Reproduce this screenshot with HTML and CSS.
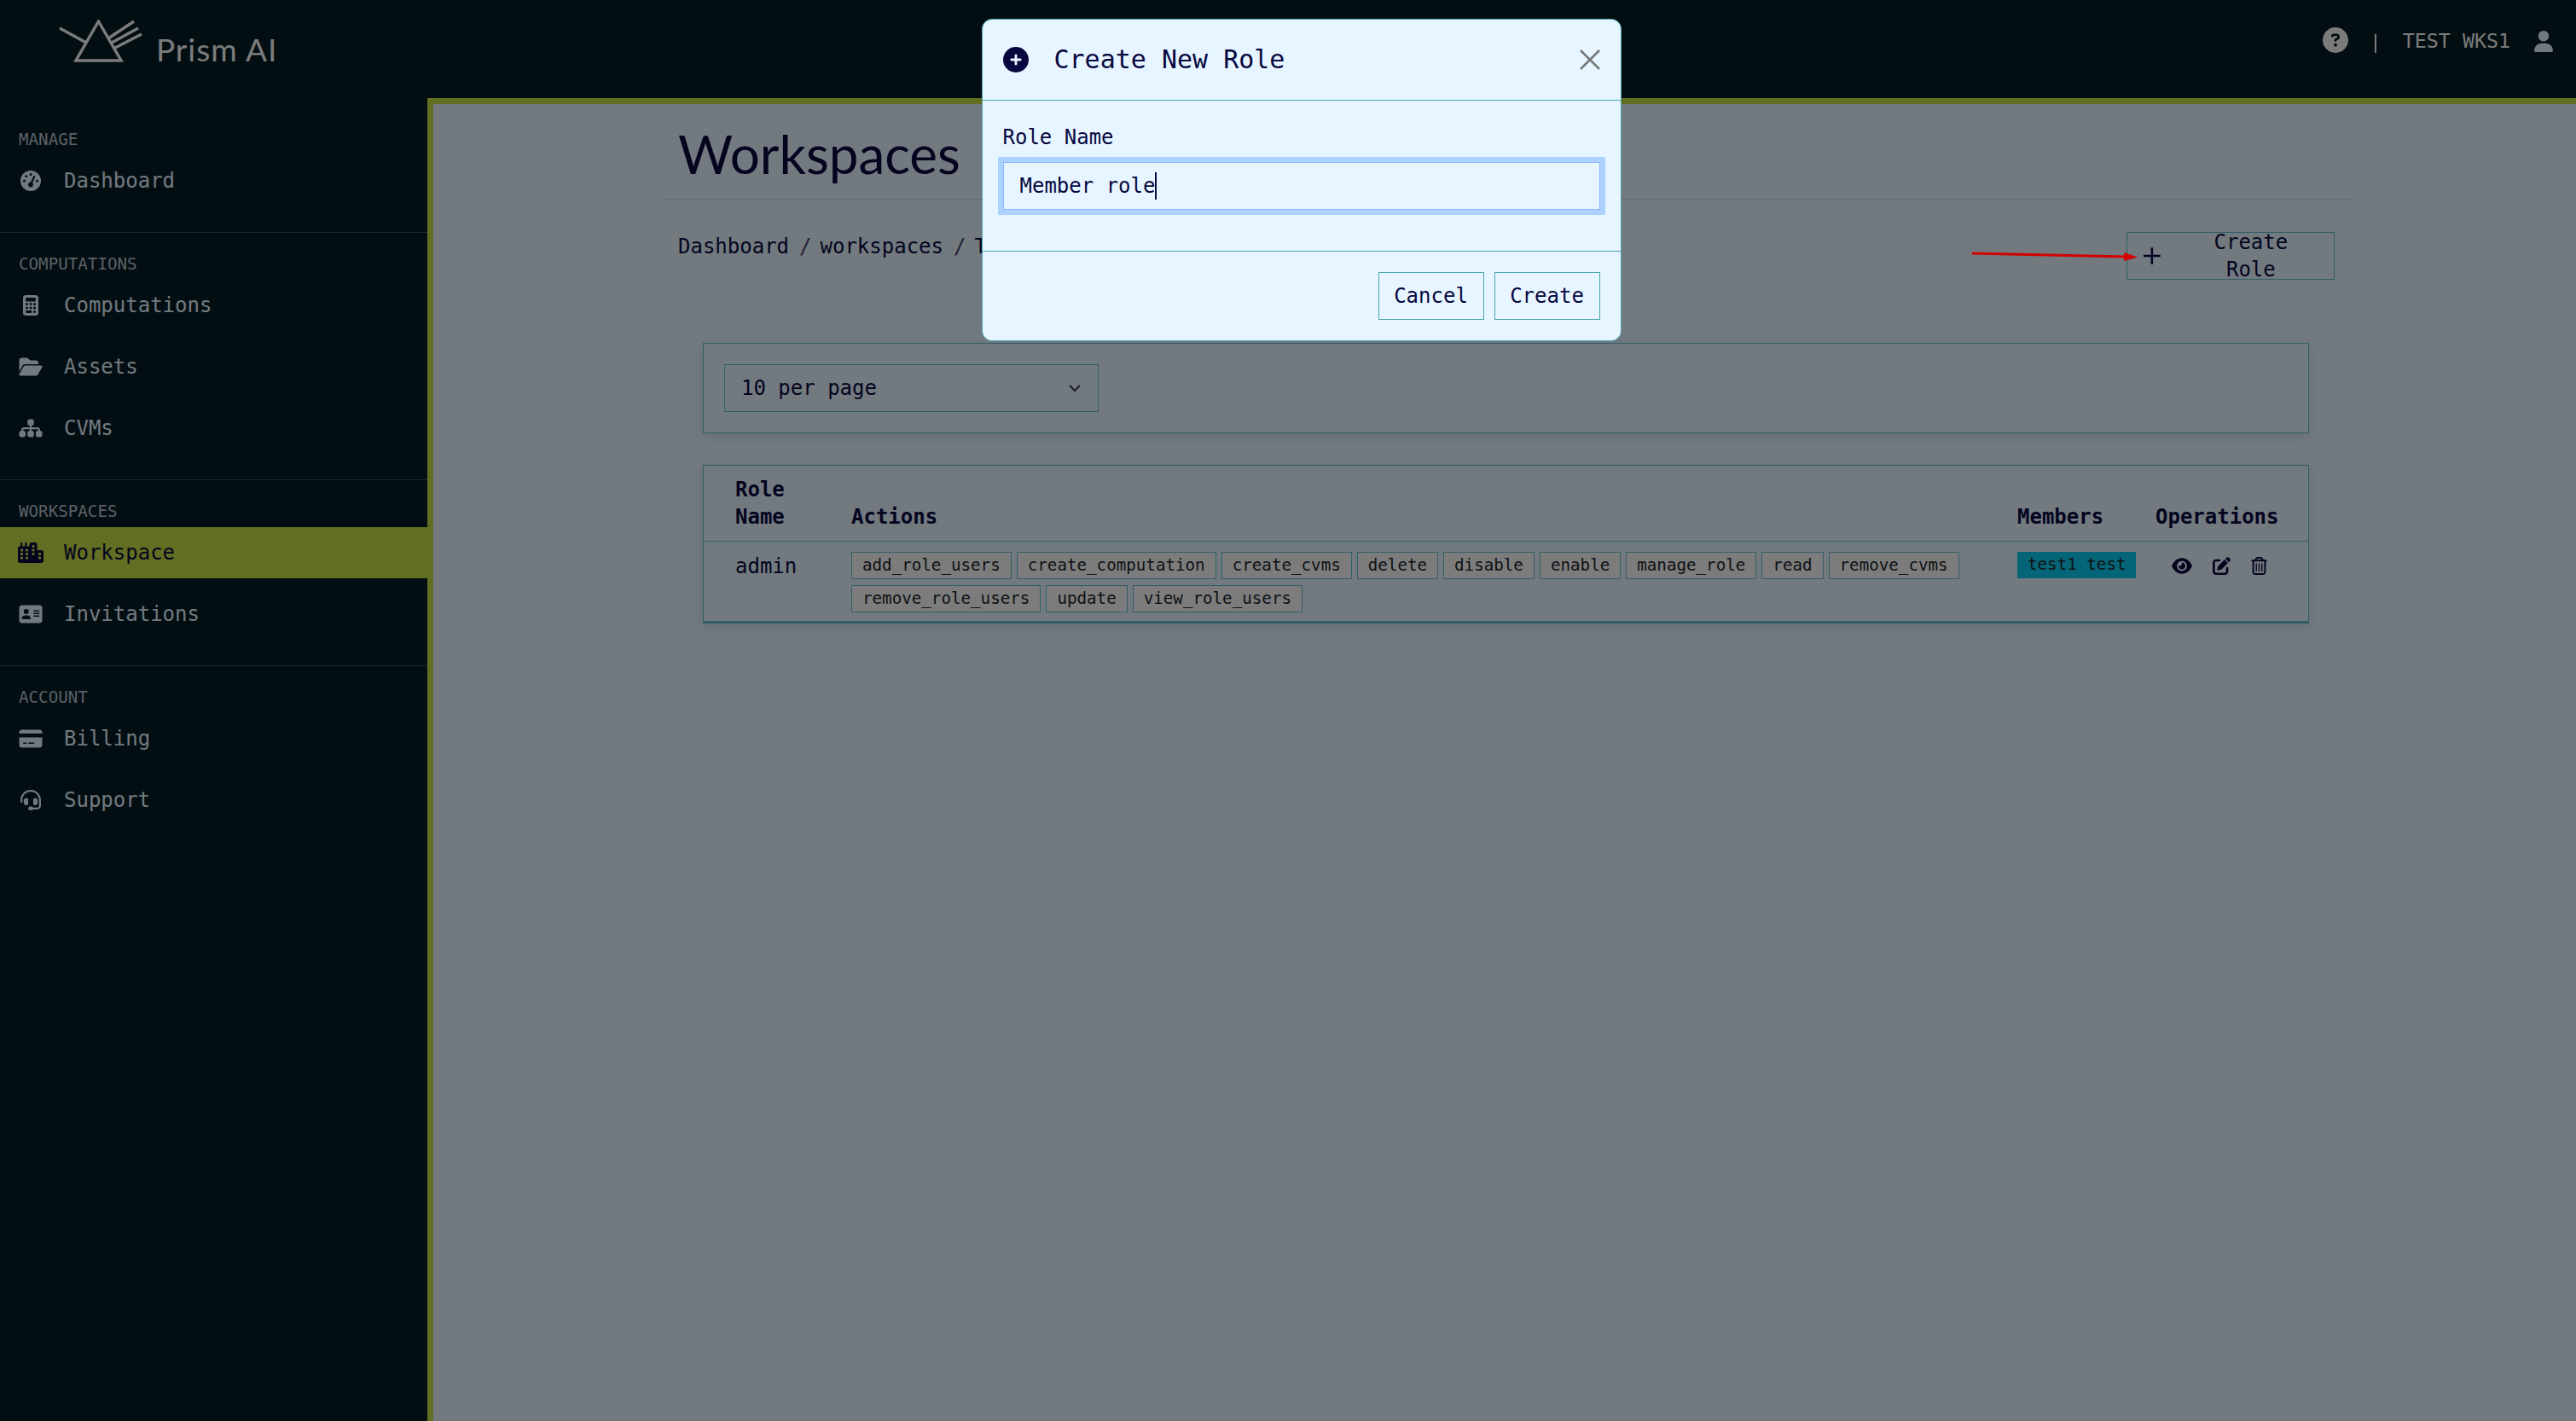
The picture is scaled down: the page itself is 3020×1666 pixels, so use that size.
FILE: index.html
```html
<!DOCTYPE html>
<html lang="en">

<head>
    <meta charset="UTF-8">
    <title>Prism AI - Workspace roles</title>
    <link rel="stylesheet" href="styles.css">
</head>

<body>
    <header class="topbar">
        <div class="brand">
            <svg class="brand-logo" viewBox="0 0 100 50">
                <path d="M47.5 2 L74 48 L21 48 Z M33 27 L2 10 M59 22 L89 2 M63 27 L94 10 M67 33 L98 17"></path>
            </svg>
            <span class="brand-name">Prism AI</span>
        </div>
        <div class="topbar-right">
            <svg class="help-icon" viewBox="0 0 512 512"><path d="M256 512A256 256 0 1 0 256 0a256 256 0 1 0 0 512zM169.8 165.3c7.9-22.3 29.1-37.3 52.8-37.3h58.3c34.9 0 63.1 28.3 63.1 63.1c0 22.6-12.1 43.5-31.7 54.8L280 264.4c-.2 13-10.9 23.6-24 23.6c-13.3 0-24-10.7-24-24V250.5c0-8.6 4.6-16.5 12.1-20.8l44.3-25.4c4.7-2.7 7.6-7.7 7.6-13.1c0-8.4-6.8-15.1-15.1-15.1H222.6c-3.4 0-6.4 2.1-7.5 5.3l-.4 1.2c-4.4 12.5-18.2 19-30.6 14.6s-19-18.2-14.6-30.6l.4-1.2zM224 352a32 32 0 1 1 64 0 32 32 0 1 1 -64 0z"></path></svg>
            <span class="topbar-sep"></span>
            <span class="topbar-user">TEST WKS1</span>
            <svg class="user-icon" viewBox="0 0 448 512"><path d="M224 256A128 128 0 1 0 224 0a128 128 0 1 0 0 256zm-45.7 48C79.8 304 0 383.8 0 482.3C0 498.7 13.3 512 29.7 512H418.3c16.4 0 29.7-13.3 29.7-29.7C448 383.8 368.2 304 269.7 304H178.3z"></path></svg>
        </div>
    </header>

    <div class="layout">
        <nav class="sidebar">
            <div class="nav-section first">
                <div class="nav-label">MANAGE</div>
                <a class="nav-item">
                    <svg viewBox="0 0 512 512"><path d="M0 256a256 256 0 1 1 512 0A256 256 0 1 1 0 256zM288 96a32 32 0 1 0 -64 0 32 32 0 1 0 64 0zM256 416c35.3 0 64-28.7 64-64c0-17.4-6.9-33.1-18.1-44.6L366 161.7c5.3-12.1-.2-26.3-12.3-31.6s-26.3 .2-31.6 12.3L257.9 288c-.6 0-1.3 0-1.9 0c-35.3 0-64 28.7-64 64s28.7 64 64 64zM176 144a32 32 0 1 0 -64 0 32 32 0 1 0 64 0zM96 288a32 32 0 1 0 0-64 32 32 0 1 0 0 64zm352-32a32 32 0 1 0 -64 0 32 32 0 1 0 64 0z"></path></svg>
                    <span>Dashboard</span>
                </a>
            </div>
            <div class="nav-section">
                <div class="nav-label">COMPUTATIONS</div>
                <a class="nav-item">
                    <svg viewBox="0 0 384 512"><path d="M64 0C28.7 0 0 28.7 0 64V448c0 35.3 28.7 64 64 64H320c35.3 0 64-28.7 64-64V64c0-35.3-28.7-64-64-64H64zM96 64H288c17.7 0 32 14.3 32 32v32c0 17.7-14.3 32-32 32H96c-17.7 0-32-14.3-32-32V96c0-17.7 14.3-32 32-32zm32 160a32 32 0 1 1 -64 0 32 32 0 1 1 64 0zM96 352a32 32 0 1 1 0-64 32 32 0 1 1 0 64zM64 416c0-17.7 14.3-32 32-32h96c17.7 0 32 14.3 32 32s-14.3 32-32 32H96c-17.7 0-32-14.3-32-32zM192 256a32 32 0 1 1 0-64 32 32 0 1 1 0 64zm32 64a32 32 0 1 1 -64 0 32 32 0 1 1 64 0zm64-64a32 32 0 1 1 0-64 32 32 0 1 1 0 64zm32 64a32 32 0 1 1 -64 0 32 32 0 1 1 64 0zM288 448a32 32 0 1 1 0-64 32 32 0 1 1 0 64z"></path></svg>
                    <span>Computations</span>
                </a>
                <a class="nav-item">
                    <svg viewBox="0 0 576 512"><path d="M88.7 223.8L0 375.8V96C0 60.7 28.7 32 64 32H181.5c17 0 33.3 6.7 45.3 18.7l26.5 26.5c12 12 28.3 18.7 45.3 18.7H416c35.3 0 64 28.7 64 64v32H144c-22.8 0-43.8 12.1-55.3 31.8zm27.6 16.1C122.1 230 132.6 224 144 224H544c11.5 0 22 6.1 27.7 16.1s5.7 22.2-.1 32.1l-112 192C453.9 474 443.4 480 432 480H32c-11.5 0-22-6.1-27.7-16.1s-5.7-22.2 .1-32.1l112-192z"></path></svg>
                    <span>Assets</span>
                </a>
                <a class="nav-item">
                    <svg viewBox="0 0 576 512"><path d="M208 80c0-26.5 21.5-48 48-48h64c26.5 0 48 21.5 48 48v64c0 26.5-21.5 48-48 48h-8v40H464c30.9 0 56 25.1 56 56v32h8c26.5 0 48 21.5 48 48v64c0 26.5-21.5 48-48 48H464c-26.5 0-48-21.5-48-48V368c0-26.5 21.5-48 48-48h8V288c0-4.4-3.6-8-8-8H312v40h8c26.5 0 48 21.5 48 48v64c0 26.5-21.5 48-48 48H256c-26.5 0-48-21.5-48-48V368c0-26.5 21.5-48 48-48h8V280H112c-4.4 0-8 3.6-8 8v32h8c26.5 0 48 21.5 48 48v64c0 26.5-21.5 48-48 48H48c-26.5 0-48-21.5-48-48V368c0-26.5 21.5-48 48-48h8V288c0-30.9 25.1-56 56-56H264V192h-8c-26.5 0-48-21.5-48-48V80z"></path></svg>
                    <span>CVMs</span>
                </a>
            </div>
            <div class="nav-section">
                <div class="nav-label">WORKSPACES</div>
                <a class="nav-item active">
                    <svg viewBox="0 0 640 512"><path d="M480 48c0-26.5-21.5-48-48-48H336c-26.5 0-48 21.5-48 48V96H224V24c0-13.3-10.7-24-24-24s-24 10.7-24 24V96H112V24c0-13.3-10.7-24-24-24S64 10.7 64 24V96H48C21.5 96 0 117.5 0 144v96V464c0 26.5 21.5 48 48 48H304h32 96H592c26.5 0 48-21.5 48-48V240c0-26.5-21.5-48-48-48H480V48zm96 320v32c0 8.8-7.2 16-16 16H528c-8.8 0-16-7.2-16-16V368c0-8.8 7.2-16 16-16h32c8.8 0 16 7.2 16 16zM240 416H208c-8.8 0-16-7.2-16-16V368c0-8.8 7.2-16 16-16h32c8.8 0 16 7.2 16 16v32c0 8.8-7.2 16-16 16zM128 400c0 8.8-7.2 16-16 16H80c-8.8 0-16-7.2-16-16V368c0-8.8 7.2-16 16-16h32c8.8 0 16 7.2 16 16v32zM560 256c8.8 0 16 7.2 16 16v32c0 8.8-7.2 16-16 16H528c-8.8 0-16-7.2-16-16V272c0-8.8 7.2-16 16-16h32zM256 176v32c0 8.8-7.2 16-16 16H208c-8.8 0-16-7.2-16-16V176c0-8.8 7.2-16 16-16h32c8.8 0 16 7.2 16 16zM112 160c8.8 0 16 7.2 16 16v32c0 8.8-7.2 16-16 16H80c-8.8 0-16-7.2-16-16V176c0-8.8 7.2-16 16-16h32zM256 304c0 8.8-7.2 16-16 16H208c-8.8 0-16-7.2-16-16V272c0-8.8 7.2-16 16-16h32c8.8 0 16 7.2 16 16v32zM112 320H80c-8.8 0-16-7.2-16-16V272c0-8.8 7.2-16 16-16h32c8.8 0 16 7.2 16 16v32c0 8.8-7.2 16-16 16zm304-48v32c0 8.8-7.2 16-16 16H368c-8.8 0-16-7.2-16-16V272c0-8.8 7.2-16 16-16h32c8.8 0 16 7.2 16 16zM368 64h32c8.8 0 16 7.2 16 16v32c0 8.8-7.2 16-16 16H368c-8.8 0-16-7.2-16-16V80c0-8.8 7.2-16 16-16zm48 112v32c0 8.8-7.2 16-16 16H368c-8.8 0-16-7.2-16-16V176c0-8.8 7.2-16 16-16h32c8.8 0 16 7.2 16 16z"></path></svg>
                    <span>Workspace</span>
                </a>
                <a class="nav-item">
                    <svg viewBox="0 0 576 512"><path d="M64 32C28.7 32 0 60.7 0 96V416c0 35.3 28.7 64 64 64H512c35.3 0 64-28.7 64-64V96c0-35.3-28.7-64-64-64H64zm80 256h64c44.2 0 80 35.8 80 80c0 8.8-7.2 16-16 16H80c-8.8 0-16-7.2-16-16c0-44.2 35.8-80 80-80zm-32-96a64 64 0 1 1 128 0 64 64 0 1 1 -128 0zm256-32H496c8.8 0 16 7.2 16 16s-7.2 16-16 16H368c-8.8 0-16-7.2-16-16s7.2-16 16-16zm0 64H496c8.8 0 16 7.2 16 16s-7.2 16-16 16H368c-8.8 0-16-7.2-16-16s7.2-16 16-16zm0 64H496c8.8 0 16 7.2 16 16s-7.2 16-16 16H368c-8.8 0-16-7.2-16-16s7.2-16 16-16z"></path></svg>
                    <span>Invitations</span>
                </a>
            </div>
            <div class="nav-section">
                <div class="nav-label">ACCOUNT</div>
                <a class="nav-item">
                    <svg viewBox="0 0 576 512"><path d="M64 32C28.7 32 0 60.7 0 96v32H576V96c0-35.3-28.7-64-64-64H64zM576 224H0V416c0 35.3 28.7 64 64 64H512c35.3 0 64-28.7 64-64V224zM112 352h64c8.8 0 16 7.2 16 16s-7.2 16-16 16H112c-8.8 0-16-7.2-16-16s7.2-16 16-16zm112 16c0-8.8 7.2-16 16-16H368c8.8 0 16 7.2 16 16s-7.2 16-16 16H240c-8.8 0-16-7.2-16-16z"></path></svg>
                    <span>Billing</span>
                </a>
                <a class="nav-item">
                    <svg viewBox="0 0 512 512"><path d="M256 48C141.1 48 48 141.1 48 256v40c0 13.3-10.7 24-24 24s-24-10.7-24-24V256C0 114.6 114.6 0 256 0S512 114.6 512 256V400.1c0 48.6-39.4 88-88.1 88L313.6 488c-8.3 14.3-23.8 24-41.6 24H240c-26.5 0-48-21.5-48-48s21.5-48 48-48h32c17.8 0 33.3 9.7 41.6 24l110.4 .1c22.1 0 40-17.9 40-40V256c0-114.9-93.1-208-208-208zM144 208h16c17.7 0 32 14.3 32 32V352c0 17.7-14.3 32-32 32H144c-35.3 0-64-28.7-64-64V272c0-35.3 28.7-64 64-64zm224 0c35.3 0 64 28.7 64 64v48c0 35.3-28.7 64-64 64H352c-17.7 0-32-14.3-32-32V240c0-17.7 14.3-32 32-32h16z"></path></svg>
                    <span>Support</span>
                </a>
            </div>
        </nav>

        <main class="content">
            <div class="container">
                <h1 class="page-title">Workspaces</h1>

                <div class="toolbar">
                    <div class="breadcrumb">
                        <span>Dashboard</span>
                        <span class="crumb-sep">/</span>
                        <span>workspaces</span>
                        <span class="crumb-sep">/</span>
                        <span>T</span>
                    </div>
                    <button class="btn create-btn">
                        <svg class="plus-icon" viewBox="0 0 20 20"><path d="M10 0V20M0 10H20"></path></svg>
                        Create Role
                    </button>
                </div>

                <div class="card filter-card">
                    <div class="per-page">
                        <span>10 per page</span>
                        <svg class="chevron" viewBox="0 0 16 16"><path d="M2 5l6 6 6-6"></path></svg>
                    </div>
                </div>

                <div class="card table-card">
                    <table class="roles-table">
                        <colgroup>
                            <col class="col-name">
                            <col class="col-actions">
                            <col class="col-members">
                            <col class="col-ops">
                        </colgroup>
                        <thead>
                            <tr>
                                <th>Role<br>Name</th>
                                <th>Actions</th>
                                <th>Members</th>
                                <th>Operations</th>
                            </tr>
                        </thead>
                        <tbody>
                            <tr>
                                <td class="role-name">admin</td>
                                <td>
                                    <div class="chips">
                                        <span class="chip">add_role_users</span>
                                        <span class="chip">create_computation</span>
                                        <span class="chip">create_cvms</span>
                                        <span class="chip">delete</span>
                                        <span class="chip">disable</span>
                                        <span class="chip">enable</span>
                                        <span class="chip">manage_role</span>
                                        <span class="chip">read</span>
                                        <span class="chip">remove_cvms</span>
                                        <span class="chip">remove_role_users</span>
                                        <span class="chip">update</span>
                                        <span class="chip">view_role_users</span>
                                    </div>
                                </td>
                                <td><span class="member">test1 test</span></td>
                                <td>
                                    <div class="ops">
                                        <svg class="op-eye" viewBox="0 0 576 512"><path d="M288 32c-80.8 0-145.5 36.8-192.6 80.6C48.6 156 17.3 208 2.5 243.7c-3.3 7.9-3.3 16.7 0 24.6C17.3 304 48.6 356 95.4 399.4C142.5 443.2 207.2 480 288 480s145.5-36.8 192.6-80.6c46.8-43.5 78.1-95.4 93-131.1c3.3-7.9 3.3-16.7 0-24.6c-14.9-35.7-46.2-87.7-93-131.1C433.5 68.8 368.8 32 288 32zM144 256a144 144 0 1 1 288 0 144 144 0 1 1 -288 0zm144-64c0 35.3-28.7 64-64 64c-7.1 0-13.9-1.2-20.3-3.3c-5.5-1.8-11.9 1.6-11.7 7.4c.3 6.9 1.3 13.8 3.2 20.7c13.7 51.2 66.4 81.6 117.6 67.9s81.6-66.4 67.9-117.6c-11.1-41.5-47.8-69.4-88.6-71.1c-5.8-.2-9.2 6.1-7.4 11.7c2.1 6.4 3.3 13.2 3.3 20.3z"></path></svg>
                                        <svg class="op-edit" viewBox="0 0 512 512"><path d="M471.6 21.7c-21.9-21.9-57.3-21.9-79.2 0L362.3 51.7l97.9 97.9 30.1-30.1c21.9-21.9 21.9-57.3 0-79.2L471.6 21.7zm-299.2 220c-6.1 6.1-10.8 13.6-13.5 21.9l-29.6 88.8c-2.9 8.6-.6 18.1 5.8 24.6s15.9 8.7 24.6 5.8l88.8-29.6c8.2-2.7 15.7-7.4 21.9-13.5L437.7 172.3 339.7 74.3 172.4 241.7zM96 64C43 64 0 107 0 160V416c0 53 43 96 96 96H352c53 0 96-43 96-96V320c0-17.7-14.3-32-32-32s-32 14.3-32 32v96c0 17.7-14.3 32-32 32H96c-17.7 0-32-14.3-32-32V160c0-17.7 14.3-32 32-32h96c17.7 0 32-14.3 32-32s-14.3-32-32-32H96z"></path></svg>
                                        <svg class="op-trash" viewBox="0 0 448 512"><path d="M170.5 51.6L151.5 80h145l-19-28.4c-1.5-2.2-4-3.6-6.7-3.6H177.1c-2.7 0-5.2 1.3-6.7 3.6zm147-26.6L354.2 80H368h48 8c13.3 0 24 10.7 24 24s-10.7 24-24 24h-8V432c0 44.2-35.8 80-80 80H112c-44.2 0-80-35.8-80-80V128H24c-13.3 0-24-10.7-24-24S10.7 80 24 80h8H80 93.8l36.7-55.1C140.9 9.4 158.4 0 177.1 0h93.7c18.7 0 36.2 9.4 46.6 24.9zM80 128V432c0 17.7 14.3 32 32 32H336c17.7 0 32-14.3 32-32V128H80zm80 64V400c0 8.8-7.2 16-16 16s-16-7.2-16-16V192c0-8.8 7.2-16 16-16s16 7.2 16 16zm80 0V400c0 8.8-7.2 16-16 16s-16-7.2-16-16V192c0-8.8 7.2-16 16-16s16 7.2 16 16zm80 0V400c0 8.8-7.2 16-16 16s-16-7.2-16-16V192c0-8.8 7.2-16 16-16s16 7.2 16 16z"></path></svg>
                                    </div>
                                </td>
                            </tr>
                        </tbody>
                    </table>
                </div>
            </div>
        </main>
    </div>

    <div class="overlay">
        <div class="modal">
            <div class="modal-header">
                <svg class="modal-icon" viewBox="0 0 512 512"><path d="M256 512A256 256 0 1 0 256 0a256 256 0 1 0 0 512zM232 344V280H168c-13.3 0-24-10.7-24-24s10.7-24 24-24h64V168c0-13.3 10.7-24 24-24s24 10.7 24 24v64h64c13.3 0 24 10.7 24 24s-10.7 24-24 24H280v64c0 13.3-10.7 24-24 24s-24-10.7-24-24z"></path></svg>
                <h2 class="modal-title">Create New Role</h2>
                <svg class="modal-close" viewBox="0 0 24 24"><path d="M1 1L23 23M23 1L1 23"></path></svg>
            </div>
            <div class="modal-body">
                <label class="field-label">Role Name</label>
                <div class="field-input">Member role<span class="caret"></span></div>
            </div>
            <div class="modal-footer">
                <button class="btn modal-btn">Cancel</button>
                <button class="btn modal-btn">Create</button>
            </div>
        </div>
    </div>

    <!-- annotation arrow, sits on top of the backdrop -->
    <svg class="annotation" viewBox="0 0 200 14">
        <path class="annotation-line" d="M1 2L182 6"></path>
        <path class="annotation-head" d="M179 1L195 6.500L179 11Z"></path>
    </svg>
</body>

</html>
```

FILE: styles.css
```css
* {
    box-sizing: border-box;
}

html,
body {
    height: 100%;
}

body {
    margin: 0;
    height: 1666px;
    overflow: hidden;
    font-family: "DejaVu Sans Mono", monospace;
    font-size: 24px;
    line-height: 32px;
    color: #08083f;
    background-color: #e4f2ff;
}

/* top bar */
.topbar {
    height: 115px;
    display: flex;
    justify-content: space-between;
    background-color: #041c24;
}

.brand {
    display: flex;
    align-items: flex-start;
    padding: 23px 0 0 68px;
}

.brand-logo {
    width: 100px;
    height: 50px;
    fill: none;
    stroke: #f6f6f6;
    stroke-width: 3.5;
}

.brand-name {
    margin: 13px 0 0 15px;
    font-family: Lato, sans-serif;
    font-size: 37px;
    line-height: 44px;
    letter-spacing: 1px;
    color: #f6f6f6;
}

.topbar-right {
    display: flex;
    align-items: flex-start;
    padding: 32px 27px 0 0;
    color: #f6f6f6;
}

.help-icon {
    width: 30px;
    height: 30px;
    fill: #f6f6f6;
}

.topbar-sep {
    width: 2px;
    height: 22px;
    margin: 8px 31px 0 31px;
    background-color: #f6f6f6;
}

.topbar-user {
    font-size: 23.300px;
    line-height: 32px;
}

.user-icon {
    width: 22px;
    height: 25px;
    margin: 4px 0 0 28px;
    fill: #e4f2ff;
}

/* main layout */
.layout {
    display: flex;
    height: 1551px;
}

.sidebar {
    width: 501px;
    flex-shrink: 0;
    background-color: #041c24;
}

.nav-section {
    padding: 25px 0 18px;
    border-top: 1px solid #385458;
}

.nav-section:last-child {
    border-bottom: 0;
}

.nav-section.first {
    padding-top: 37px;
    border-top: 0;
}

.nav-label {
    padding-left: 22px;
    margin-bottom: 6px;
    font-size: 19.200px;
    line-height: 24px;
    font-weight: 500;
    color: #b8c0cc;
}

.nav-item {
    display: flex;
    align-items: center;
    gap: 24px;
    height: 60px;
    margin-bottom: 12px;
    padding-left: 21px;
    color: #e4f2ff;
}

.nav-item svg {
    width: 30px;
    height: 24px;
    fill: currentColor;
}

.nav-item.active {
    background-color: #c4dc42;
    color: #08083f;
}

.content {
    flex: 1;
    border-left: 7px solid #c4dc42;
    border-top: 7px solid #c4dc42;
    padding: 0 264px 0 268px;
}

.page-title {
    height: 112px;
    margin: 0;
    padding: 22px 0 0 19px;
    border-bottom: 1px solid #cccccc;
    font-family: Lato, sans-serif;
    font-weight: 400;
    font-size: 62px;
    line-height: 72px;
}

.toolbar {
    display: flex;
    justify-content: space-between;
    align-items: flex-start;
    margin-top: 38px;
    padding: 0 19px;
}

.breadcrumb {
    display: flex;
    line-height: 32px;
    padding-top: 1px;
}

.crumb-sep {
    margin: 0 10px 0 12px;
    color: #444466;
}

/* buttons share the outlined look */
.btn {
    height: 56px;
    padding: 0 19px;
    font: inherit;
    color: inherit;
    background: transparent;
    border: 1px solid #5fc0cc;
}

.create-btn {
    display: flex;
    align-items: center;
    width: 244px;
}

.plus-icon {
    width: 20px;
    height: 20px;
    margin-right: 28px;
    fill: none;
    stroke: #08083f;
    stroke-width: 2.500;
}

.card {
    margin: 0 49px 0 48px;
    border: 1px solid #5fc0cc;
    box-shadow: 0 4px 14px rgba(0, 0, 0, 0.1);
}

.filter-card {
    margin-top: 74px;
    padding: 24px;
}

.per-page {
    display: flex;
    justify-content: space-between;
    align-items: center;
    width: 439px;
    height: 56px;
    padding: 0 19px;
    border: 1px solid #5fc0cc;
}

.chevron {
    width: 16px;
    height: 16px;
    fill: none;
    stroke: #343a40;
    stroke-width: 2;
}

.table-card {
    margin-top: 37px;
    border-bottom-width: 3px;
}

.roles-table {
    width: 100%;
    table-layout: fixed;
    border-collapse: collapse;
}

.col-name {
    width: 155px;
}

.col-members {
    width: 162px;
}

.col-ops {
    width: 197px;
}

.roles-table th {
    padding: 12px 18px;
    text-align: left;
    vertical-align: bottom;
    font-weight: 700;
    border-bottom: 1px solid #5fc0cc;
}

.roles-table td {
    padding: 12px 18px 10px;
    vertical-align: top;
}

.roles-table th:first-child,
.roles-table td:first-child {
    padding-left: 37px;
}

.role-name {
    line-height: 34px;
}

.chips {
    display: flex;
    flex-wrap: wrap;
    gap: 7px 6px;
    margin-right: 0;
}

.chip {
    height: 32px;
    padding: 0 12px;
    font-size: 19.200px;
    line-height: 30px;
    font-weight: 500;
    color: #212529;
    background-color: #f8f8f8;
    border: 1px solid #5fc0cc;
}

.member {
    display: block;
    width: 139px;
    height: 31px;
    padding: 0 12px;
    font-size: 19.200px;
    line-height: 29px;
    font-weight: 500;
    white-space: nowrap;
    color: #212529;
    background-color: #0bcaf0;
}

.ops {
    display: flex;
    align-items: center;
    height: 32px;
    fill: #08083f;
}

.op-eye {
    width: 24px;
    height: 21px;
    margin-left: 19px;
}

.op-edit {
    width: 21px;
    height: 21px;
    margin-left: 24px;
}

.op-trash {
    width: 19px;
    height: 21px;
    margin-left: 24px;
}

/* modal */
.overlay {
    position: fixed;
    top: 0;
    left: 0;
    width: 100%;
    height: 100%;
    display: flex;
    justify-content: center;
    align-items: flex-start;
    padding: 22px 0 0 31px;
    background-color: rgba(0, 0, 0, 0.5);
}

.modal {
    width: 750px;
    background-color: #e6f5ff;
    border: 1px solid #4ca6ae;
    border-radius: 12px;
}

.modal-header {
    display: flex;
    align-items: center;
    height: 95px;
    padding: 0 24px;
    border-bottom: 1px solid #4ca6ae;
}

.modal-icon {
    width: 30px;
    height: 30px;
    fill: #08083f;
}

.modal-title {
    flex: 1;
    margin: 0 0 0 30px;
    font-size: 30px;
    font-weight: 400;
}

.modal-close {
    width: 24px;
    height: 24px;
    fill: none;
    stroke: #777777;
    stroke-width: 2.500;
}

.modal-body {
    padding: 27px 24px 48px;
    border-bottom: 1px solid #4ca6ae;
}

.field-label {
    display: block;
    margin-bottom: 13px;
}

.field-input {
    display: flex;
    align-items: center;
    height: 56px;
    padding: 0 19px;
    background-color: #e6f5ff;
    border: 1px solid #8ab8ff;
    box-shadow: 0 0 0 6px #aed2ff;
}

.caret {
    width: 2px;
    height: 32px;
    background-color: #08083f;
}

.modal-footer {
    display: flex;
    justify-content: flex-end;
    gap: 12px;
    padding: 24px;
}

.modal-btn {
    width: 124px;
    padding: 0;
    border-color: #4ca6ae;
}

.annotation {
    position: absolute;
    top: 295px;
    left: 2311px;
    width: 200px;
    height: 14px;
}

.annotation-line {
    fill: none;
    stroke: #d40000;
    stroke-width: 3;
}

.annotation-head {
    fill: #d40000;
}
```
